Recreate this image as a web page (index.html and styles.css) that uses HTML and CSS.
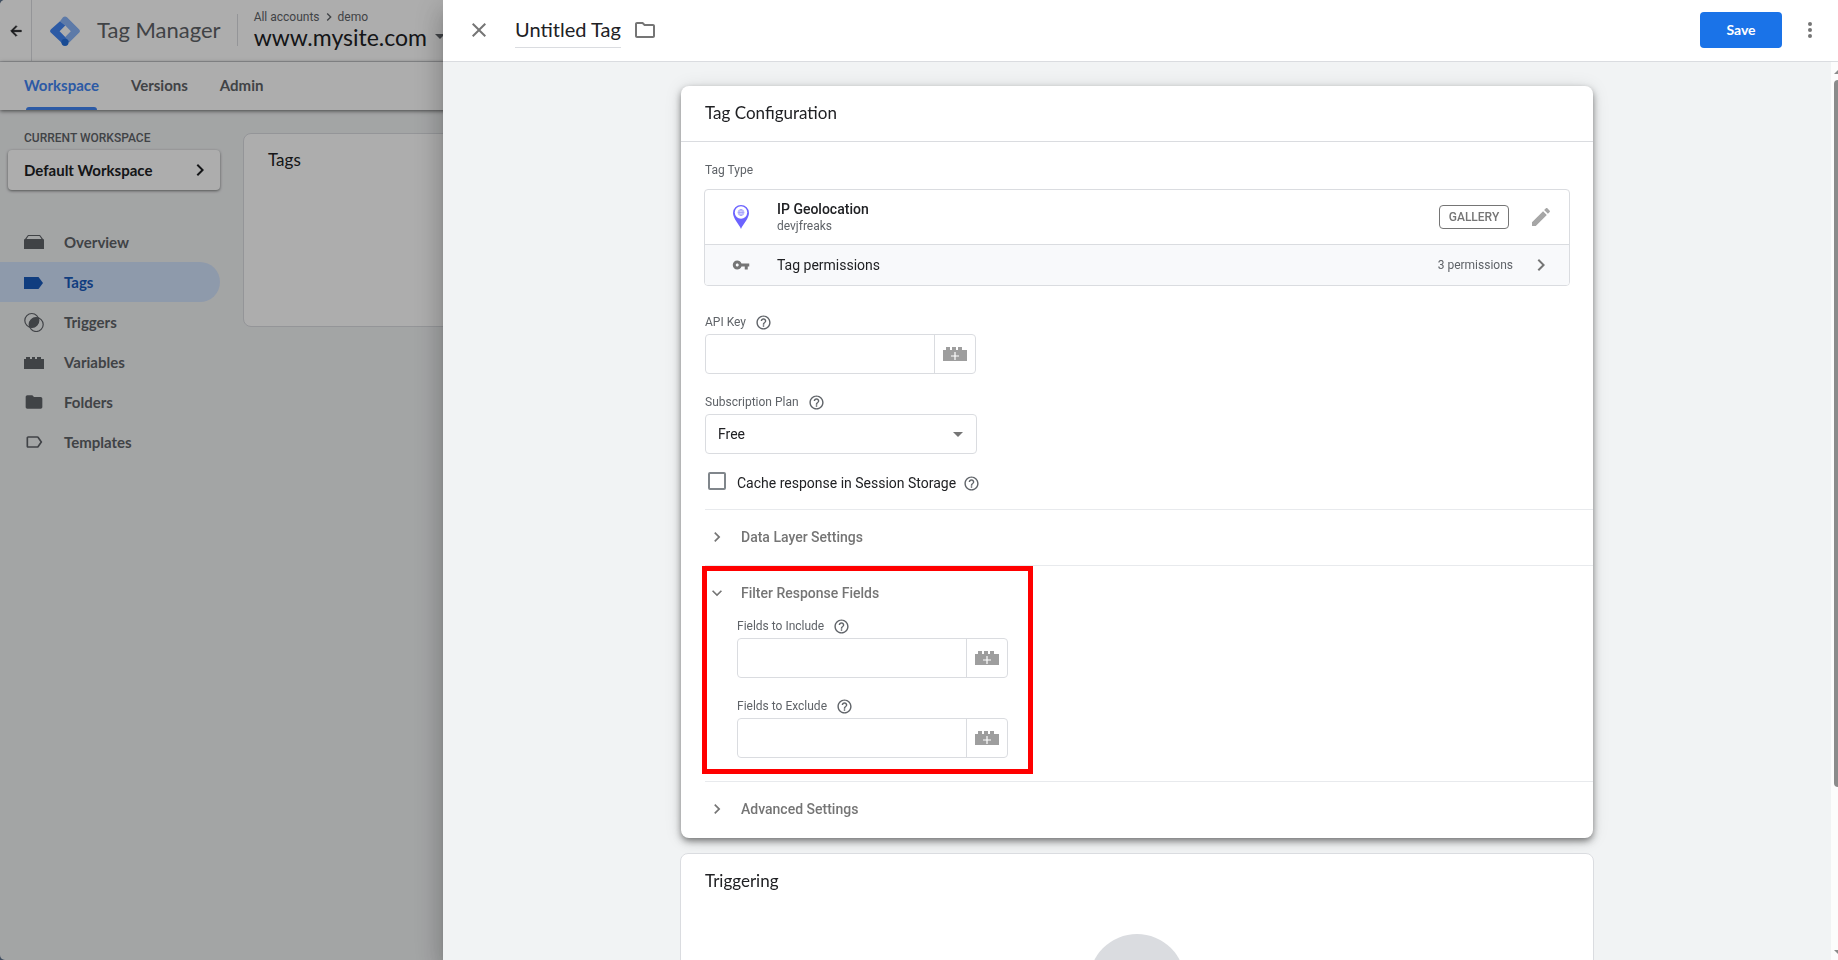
FILE: index.html
```html
<!DOCTYPE html>
<html lang="en">
<head>
  <meta charset="utf-8">
  <title>Tag Manager</title>
  <link rel="stylesheet" href="styles.css">
</head>
<body>

<svg class="sprite" aria-hidden="true">
  <symbol id="chevron" viewBox="0 0 24 24"><path d="M10 6L8.59 7.41 13.17 12l-4.58 4.59L10 18l6-6z"/></symbol>
  <symbol id="help" viewBox="0 0 24 24"><path d="M11 18h2v-2h-2v2zm1-16C6.48 2 2 6.48 2 12s4.48 10 10 10 10-4.48 10-10S17.52 2 12 2zm0 18c-4.41 0-8-3.59-8-8s3.59-8 8-8 8 3.59 8 8-3.59 8-8 8zm0-14c-2.21 0-4 1.79-4 4h2c0-1.1.9-2 2-2s2 .9 2 2c0 2-3 1.75-3 5h2c0-2.25 3-2.5 3-5 0-2.21-1.79-4-4-4z"/></symbol>
  <symbol id="brick-add" viewBox="0 0 24 16"><path d="M0 4h3V1h4v3h2V1h4v3h2V1h4v3h5v11H0z"/><path d="M12 6v8M8 10h8" stroke="#fff" stroke-width="1.2"/></symbol>
  <symbol id="caret" viewBox="0 0 10 5"><path d="M0 0h10L5 5z"/></symbol>
</svg>

<div class="app">
  <header class="topbar">
    <button class="back" aria-label="Back">
      <svg width="16" height="16" viewBox="0 0 24 24"><path d="M20 11H7.83l5.59-5.59L12 4l-8 8 8 8 1.41-1.41L7.83 13H20z" stroke="currentColor"/></svg>
    </button>
    <svg class="logo" viewBox="0 0 30 30">
      <path d="M10 5.200L13 1.300a3 3 0 0 1 4 0L29 13.200a2.500 2.500 0 0 1 0 3.600L19 26.800 15.200 21 20.800 15.200 15.300 9.600z" fill="#8ab4f8"/>
      <path d="M10 5.200L15.300 9.600 9.600 15.200 15.200 21 19 25.500 14 29 1 16.800a2.500 2.500 0 0 1 0-3.600z" fill="#4285f4"/>
      <circle cx="15" cy="26.300" r="3.600" fill="#246fdb"/>
    </svg>
    <span class="product">Tag Manager</span>
    <div class="account">
      <div class="crumbs">All accounts <svg class="crumb-arrow" viewBox="0 0 24 24"><use href="#chevron"/></svg> demo</div>
      <div class="site">www.mysite.com <svg width="10" height="5"><use href="#caret"/></svg></div>
    </div>
  </header>
  <nav class="tabs">
    <a href="#" class="active">Workspace</a>
    <a href="#">Versions</a>
    <a href="#">Admin</a>
  </nav>

  <div class="workspace">
    <aside class="sidebar">
      <div class="side-title">CURRENT WORKSPACE</div>
      <button class="switcher">Default Workspace <svg width="24" height="24"><use href="#chevron"/></svg></button>
      <nav class="menu">
        <a href="#"><svg viewBox="0 0 20 20"><path d="M4 3h12l3 4v10H1V7zM4.500 4L2.500 7h15l-2-3z" fill-rule="evenodd"/><path d="M0 8a1 1 0 0 1 1-1h18a1 1 0 0 1 1 1v9H0z"/></svg>Overview</a>
        <a href="#" class="active"><svg viewBox="0 0 20 20"><path d="M0 5h14.500l4.500 6-4.500 6H0z"/></svg>Tags</a>
        <a href="#"><svg viewBox="0 0 20 20"><g fill="none" stroke="currentColor" stroke-width="1.200"><circle cx="7.800" cy="8.500" r="7"/><circle cx="12.200" cy="12.500" r="7"/></g><path d="M14.260 5.820A7 7 0 0 0 5.740 15.180 7 7 0 0 0 14.260 5.820z"/></svg>Triggers</a>
        <a href="#"><svg viewBox="0 0 20 20"><path d="M0 7h2V5h4v2h2V5h3v2h2V5h4v2h3v10H0z"/></svg>Variables</a>
        <a href="#"><svg viewBox="0 0 24 24"><path d="M10 4H4c-1.100 0-1.990.9-1.990 2L2 18c0 1.100.9 2 2 2h16c1.100 0 2-.9 2-2V8c0-1.100-.9-2-2-2h-8l-2-2z"/></svg>Folders</a>
        <a href="#"><svg viewBox="0 0 24 24"><path d="M17.630 5.840C17.270 5.330 16.670 5 16 5L5 5.010C3.900 5.010 3 5.900 3 7v10c0 1.100.9 1.990 2 1.990L16 19c.67 0 1.270-.33 1.630-.84L22 12l-4.370-6.160zM16 17H5V7h11l3.550 5L16 17z"/></svg>Templates</a>
      </nav>
    </aside>
    <main class="tag-list">
      <h2>Tags</h2>
    </main>
  </div>
</div>

<div class="backdrop"></div>

<div class="drawer" role="dialog" aria-label="Tag editor">
  <header class="drawer-head">
    <button class="icon-btn" aria-label="Close"><svg width="24" height="24" viewBox="0 0 24 24"><path d="M19 6.410L17.590 5 12 10.590 6.410 5 5 6.410 10.590 12 5 17.590 6.410 19 12 13.410 17.590 19 19 17.590 13.410 12z"/></svg></button>
    <h1>Untitled Tag</h1>
    <button class="icon-btn" aria-label="Move to folder"><svg width="24" height="24" viewBox="0 0 24 24"><path d="M9.170 6l2 2H20v10H4V6h5.170M10 4H4c-1.100 0-1.990.9-1.990 2L2 18c0 1.100.9 2 2 2h16c1.100 0 2-.9 2-2V8c0-1.100-.9-2-2-2h-8l-2-2z"/></svg></button>
    <button class="save">Save</button>
    <button class="icon-btn" aria-label="More"><svg width="24" height="24" viewBox="0 0 24 24"><circle cx="12" cy="6" r="2"/><circle cx="12" cy="12" r="2"/><circle cx="12" cy="18" r="2"/></svg></button>
  </header>

  <div class="drawer-body">
    <div class="scroll-area">
      <section class="card config">
        <h2 class="card-title">Tag Configuration</h2>
        <div class="card-body">
          <div class="label">Tag Type</div>
          <div class="tag-type">
            <div class="type-row">
              <span class="type-icon">
                <svg width="16" height="24" viewBox="0 0 16 24"><path d="M8 0a8 8 0 0 0-8 8c0 5.500 6 11 8 16 2-5 8-10.500 8-16a8 8 0 0 0-8-8z" fill="#6c63ff"/><circle cx="8" cy="7.500" r="6.200" fill="#fff"/><g fill="none" stroke="#a09afc" stroke-width=".8"><circle cx="8" cy="7.500" r="3"/><path d="M5 7.500h6M8 4.500v6"/><ellipse cx="8" cy="7.500" rx="1.500" ry="3"/></g></svg>
              </span>
              <div class="type-text">
                <div class="type-name">IP Geolocation</div>
                <div class="type-author">devjfreaks</div>
              </div>
              <span class="badge">GALLERY</span>
              <button class="icon-btn edit" aria-label="Edit"><svg width="24" height="24" viewBox="0 0 24 24"><path d="M3 17.250V21h3.750L17.810 9.940l-3.750-3.750L3 17.250zM20.710 7.040c.39-.39.39-1.020 0-1.410l-2.340-2.340c-.39-.39-1.020-.39-1.410 0l-1.830 1.830 3.750 3.750 1.830-1.830z"/></svg></button>
            </div>
            <div class="type-row permissions">
              <span class="type-icon"><svg width="18" height="18" viewBox="0 0 24 24"><path d="M12.650 10C11.830 7.670 9.610 6 7 6c-3.310 0-6 2.690-6 6s2.690 6 6 6c2.610 0 4.830-1.670 5.650-4H17v4h4v-4h2v-4H12.650zM7 14c-1.100 0-2-.9-2-2s.9-2 2-2 2 .9 2 2-.9 2-2 2z"/></svg></span>
              <div class="type-text">Tag permissions</div>
              <span class="count">3 permissions</span>
              <button class="icon-btn" aria-label="Show permissions"><svg width="24" height="24"><use href="#chevron"/></svg></button>
            </div>
          </div>

          <div class="field">
            <label class="label" for="apiKey">API Key <svg class="help"><use href="#help"/></svg></label>
            <div class="input-group">
              <input type="text" id="apiKey">
              <button aria-label="Insert variable"><svg width="24" height="16"><use href="#brick-add"/></svg></button>
            </div>
          </div>

          <div class="field">
            <label class="label" for="plan">Subscription Plan <svg class="help"><use href="#help"/></svg></label>
            <div class="select">
              <select id="plan"><option>Free</option></select>
              <svg width="10" height="5"><use href="#caret"/></svg>
            </div>
          </div>

          <div class="check">
            <input type="checkbox" id="cache">
            <label for="cache">Cache response in Session Storage</label>
            <svg class="help"><use href="#help"/></svg>
          </div>
        </div>

        <div class="group">
          <button class="group-head"><svg width="20" height="20"><use href="#chevron"/></svg>Data Layer Settings</button>
        </div>

        <div class="group">
          <button class="group-head open"><svg width="20" height="20"><use href="#chevron"/></svg>Filter Response Fields</button>
          <div class="group-body">
            <div class="field">
              <label class="label" for="include">Fields to Include <svg class="help"><use href="#help"/></svg></label>
              <div class="input-group">
                <input type="text" id="include">
                <button aria-label="Insert variable"><svg width="24" height="16"><use href="#brick-add"/></svg></button>
              </div>
            </div>
            <div class="field">
              <label class="label" for="exclude">Fields to Exclude <svg class="help"><use href="#help"/></svg></label>
              <div class="input-group">
                <input type="text" id="exclude">
                <button aria-label="Insert variable"><svg width="24" height="16"><use href="#brick-add"/></svg></button>
              </div>
            </div>
          </div>
          <div class="highlight"></div>
        </div>

        <div class="group">
          <button class="group-head"><svg width="20" height="20"><use href="#chevron"/></svg>Advanced Settings</button>
        </div>
      </section>

      <section class="card triggering">
        <h2 class="card-title">Triggering</h2>
        <div class="placeholder"></div>
      </section>
    </div>
    <div class="scrollbar">
      <i class="up"></i>
      <div class="thumb"></div>
      <i class="down"></i>
    </div>
  </div>
</div>

</body>
</html>
```
FILE: styles.css
```css
* {
  box-sizing: border-box;
}

body {
  margin: 0;
  height: 100vh;
  overflow: hidden;
  background: #60758f;
  font-family: Roboto, "Liberation Sans", sans-serif;
  font-size: 14px;
  color: #202124;
}

h1, h2 {
  margin: 0;
  font-weight: 400;
}

h1, h2, .product, .site, .tabs, .switcher, .menu, .save {
  font-family: Lato, Roboto, sans-serif;
}

a {
  color: inherit;
  text-decoration: none;
}

button {
  border: none;
  padding: 0;
  background: none;
  font: inherit;
  color: inherit;
  cursor: pointer;
}

svg {
  display: block;
  flex: none;
  fill: currentColor;
}

.sprite {
  position: absolute;
  width: 0;
  height: 0;
}

/* Page behind the drawer */
.app {
  height: 100%;
  display: flex;
  flex-direction: column;
  border-radius: 5px 0 0 5px;
  background: #f1f3f4;
  overflow: hidden;
}

.topbar {
  display: flex;
  align-items: center;
  height: 62px;
  flex: none;
  border-bottom: 1px solid #dadce0;
  background: #fff;
}

.back {
  display: flex;
  align-items: center;
  justify-content: center;
  width: 32px;
  height: 100%;
  border-right: 1px solid #dadce0;
}

.logo {
  width: 30px;
  height: 30px;
  margin: 0 17px 0 18px;
}

.product {
  font-size: 22px;
  line-height: 28px;
  padding-bottom: 2px;
  color: #5f6368;
}

.account {
  margin-left: 16px;
  padding-left: 16px;
  border-left: 1px solid #dadce0;
  height: 32px;
  margin-bottom: 2px;
  display: flex;
  flex-direction: column;
  justify-content: center;
}

.crumbs, .site {
  display: flex;
  align-items: center;
}

.crumbs {
  font-size: 12px;
  line-height: 16px;
  color: #5f6368;
}

.crumb-arrow {
  width: 18px;
  height: 16px;
}

.site {
  gap: 8px;
  padding-bottom: 2px;
  font-size: 23px;
  line-height: 24px;
}

.site svg {
  color: #5f6368;
}

.tabs {
  display: flex;
  gap: 32px;
  height: 48px;
  flex: none;
  padding-left: 24px;
  background: #fff;
  box-shadow: 0 1px 4px rgba(0, 0, 0, 0.6);
  font-size: 15px;
  font-weight: 700;
  line-height: 47px;
  color: #5f6368;
}

.tabs .active {
  position: relative;
  color: #4285f4;
}

.tabs .active::after {
  content: "";
  position: absolute;
  left: 2px;
  right: 2px;
  bottom: 0;
  height: 3px;
  border-radius: 3px 3px 0 0;
  background: #4285f4;
}

.workspace {
  display: flex;
  flex: 1;
}

.sidebar {
  width: 220px;
  flex: none;
  padding-top: 20px;
}

.side-title {
  padding-left: 24px;
  font-size: 12px;
  font-weight: 500;
  line-height: 16px;
  color: #5f6368;
}

.switcher {
  display: flex;
  align-items: center;
  justify-content: space-between;
  width: 212px;
  height: 40px;
  margin: 4px 0 32px 8px;
  padding: 0 8px 0 16px;
  border-radius: 4px;
  background: #fff;
  box-shadow: 0 1px 3px rgba(0, 0, 0, 0.5);
  font-size: 15px;
  font-weight: 700;
}

.menu a {
  display: flex;
  align-items: center;
  gap: 20px;
  height: 40px;
  padding-left: 24px;
  font-size: 15px;
  font-weight: 700;
  color: #5f6368;
}

.menu svg {
  width: 20px;
  height: 20px;
}

.menu .active {
  border-radius: 0 20px 20px 0;
  background: #d2e3fc;
  color: #185abc;
}

.tag-list {
  flex: 1;
  height: 194px;
  margin: 23px 24px 0 23px;
  padding: 16px 24px;
  border: 1px solid #dadce0;
  border-radius: 8px;
  background: #fff;
}

.tag-list h2 {
  font-size: 17px;
  line-height: 20px;
}

.backdrop {
  position: fixed;
  inset: 0;
  background: rgba(0, 0, 0, 0.32);
}

/* Drawer */
.drawer {
  position: fixed;
  top: 0;
  right: 0;
  bottom: 0;
  left: 443px;
  display: flex;
  flex-direction: column;
  background: #f1f3f4;
  box-shadow: 0 8px 10px -5px rgba(0, 0, 0, 0.2), 0 16px 24px 2px rgba(0, 0, 0, 0.14), 0 6px 30px 5px rgba(0, 0, 0, 0.12);
}

.drawer-head {
  display: flex;
  align-items: center;
  height: 62px;
  flex: none;
  padding: 0 16px 2px 24px;
  border-bottom: 1px solid #dadce0;
  background: #fff;
}

.icon-btn {
  color: #757575;
}

.drawer-head h1 {
  margin: 2px 12px 0 24px;
  padding-bottom: 2px;
  border-bottom: 1px solid #dadce0;
  font-size: 20px;
  line-height: 32px;
}

.save {
  width: 82px;
  height: 36px;
  margin: 0 16px 0 auto;
  border-radius: 4px;
  background: #1a73e8;
  color: #fff;
  font-weight: 700;
}

.drawer-body {
  display: flex;
  flex: 1;
  min-height: 0;
}

.scroll-area {
  flex: 1;
  padding: 24px;
  overflow: hidden;
}

.card {
  max-width: 912px;
  margin: 0 auto;
  border-radius: 8px;
  background: #fff;
}

.config {
  margin-bottom: 15px;
  padding-bottom: 1px;
  box-shadow: 0 3px 6px -1px rgba(0, 0, 0, 0.4), 0 4px 10px rgba(0, 0, 0, 0.2), 0 1px 18px rgba(0, 0, 0, 0.1);
}

.card-title {
  height: 56px;
  padding: 0 24px;
  font-size: 17px;
  line-height: 53px;
}

.config .card-title {
  border-bottom: 1px solid #dadce0;
}

.card-body {
  padding: 20px 24px 17px;
}

.label {
  display: flex;
  align-items: center;
  gap: 9px;
  font-size: 12px;
  line-height: 16px;
  color: #5f6368;
}

.help {
  width: 17px;
  height: 17px;
  color: #5f6368;
}

.tag-type {
  margin: 11px -1px 28px;
  border: 1px solid #dadce0;
  border-radius: 4px;
  overflow: hidden;
}

.type-row {
  display: flex;
  align-items: center;
  height: 54px;
  padding-right: 16px;
}

.type-icon {
  display: flex;
  justify-content: center;
  width: 72px;
  color: #757575;
}

.type-text {
  flex: 1;
}

.type-name {
  font-weight: 500;
  line-height: 18px;
}

.type-author {
  font-size: 12px;
  line-height: 16px;
  color: #5f6368;
}

.badge {
  width: 70px;
  margin-right: 20px;
  border: 1px solid #757575;
  border-radius: 4px;
  font-size: 12px;
  font-weight: 500;
  line-height: 22px;
  text-align: center;
  color: #757575;
}

.edit {
  color: #a6a6a6;
}

.permissions {
  height: 41px;
  border-top: 1px solid #dadce0;
  background: #f8f9fb;
}

.count {
  margin-right: 16px;
  font-size: 12px;
  color: #5f6368;
}

.field {
  margin-bottom: 20px;
}

.field .label {
  margin-bottom: 3px;
  line-height: 17px;
}

.input-group {
  display: flex;
  width: 271px;
  height: 40px;
  border: 1px solid #dadce0;
  border-radius: 4px;
}

.input-group input {
  flex: 1;
  min-width: 0;
  border: none;
  padding: 0 12px;
  background: none;
  font: inherit;
}

.input-group button {
  width: 41px;
  padding-left: 8px;
  border-left: 1px solid #dadce0;
  color: #9e9e9e;
}

.select {
  position: relative;
  width: 272px;
}

.select select {
  display: block;
  width: 100%;
  height: 40px;
  padding: 0 12px;
  border: 1px solid #dadce0;
  border-radius: 4px;
  appearance: none;
  background: #fff;
  font: inherit;
  color: inherit;
}

.select svg {
  position: absolute;
  top: 18px;
  right: 14px;
  color: #757575;
}

.check {
  display: flex;
  align-items: center;
  height: 18px;
}

.check input {
  appearance: none;
  width: 18px;
  height: 18px;
  margin: 0 11px 4px 3px;
  border: 2px solid #80868b;
  border-radius: 2px;
}

.check label {
  margin-right: 7px;
}

.group {
  position: relative;
  margin-left: 24px;
  border-top: 1px solid #e8eaed;
}

.group-head {
  display: flex;
  align-items: center;
  gap: 14px;
  height: 55px;
  padding: 0 0 2px 2px;
  font-weight: 500;
  color: #757575;
}

.group-head.open svg {
  transform: rotate(90deg);
}

.group-body {
  margin-top: -3px;
  padding: 0 0 23px 32px;
}

.group-body .field:last-child {
  margin-bottom: 0;
}

/* Red frame round the filter fields */
.highlight {
  position: absolute;
  top: 0;
  left: -3px;
  width: 331px;
  bottom: 7px;
  border: 5px solid #f00;
  pointer-events: none;
}

.triggering {
  max-width: 914px;
  border: 1px solid #dadce0;
}

.placeholder {
  width: 96px;
  height: 96px;
  margin: 24px auto;
  border-radius: 50%;
  background: #dadce0;
}

.scrollbar {
  display: flex;
  flex-direction: column;
  width: 7px;
  padding: 8px 0 6px 3px;
  background: #fcfcfc;
  overflow: hidden;
}

.up, .down {
  width: 8px;
  border: 4px solid transparent;
  border-top: none;
  border-bottom-color: #8b8b8b;
}

.down {
  margin-top: auto;
  border-top: 4px solid #8b8b8b;
  border-bottom: none;
}

.thumb {
  height: 80%;
  margin: 6px 0 0;
  border-radius: 4px 0 0 4px;
  background: #8b8b8b;
}
```
